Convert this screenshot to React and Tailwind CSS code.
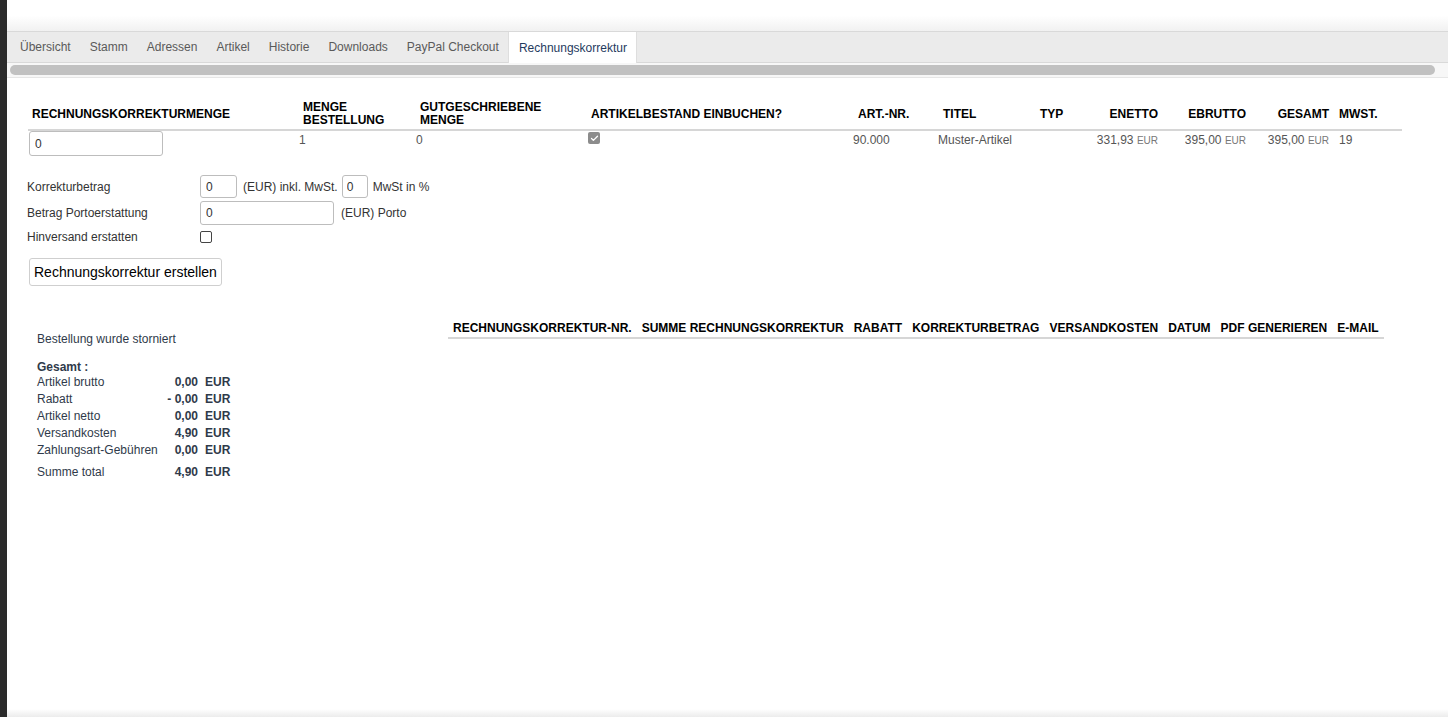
import { Check } from 'lucide-react';

const tabs = ['Übersicht', 'Stamm', 'Adressen', 'Artikel', 'Historie', 'Downloads', 'PayPal Checkout', 'Rechnungskorrektur'];

const totals = [
    { label: 'Artikel brutto', value: '0,00' },
    { label: 'Rabatt', value: '- 0,00' },
    { label: 'Artikel netto', value: '0,00' },
    { label: 'Versandkosten', value: '4,90' },
    { label: 'Zahlungsart-Gebühren', value: '0,00' },
];

const korrekturCols = ['Rechnungskorrektur-Nr.', 'Summe Rechnungskorrektur', 'Rabatt', 'Korrekturbetrag', 'Versandkosten', 'Datum', 'PDF generieren', 'E-Mail'];

function Eur({ value }) {
    return (
        <span>
            {value} <span className="text-[10px] text-[#777]">EUR</span>
        </span>
    );
}

export default function App() {
    return (
        <div className="flex h-[717px] overflow-hidden bg-white font-['Liberation_Sans',Arial,sans-serif] text-[12px] text-[#333]">
            {/* dark side strip */}
            <div className="w-[7px] shrink-0 bg-[#2b2b2b]"></div>

            <div className="flex flex-1 flex-col min-w-0">
                <div className="h-[31px] shrink-0 bg-gradient-to-b from-white via-white to-[#f1f1f1]"></div>

                {/* Tabs */}
                <div className="flex h-[32px] shrink-0 items-stretch border-y border-[#d9d9d9] bg-[#ebebeb] pl-[3.5px]">
                    {tabs.map((t, idx) => (
                        <div
                            key={idx}
                            className={
                                idx === tabs.length - 1
                                    ? 'flex items-center px-[9.5px] bg-white border-x border-[#dedede] text-[#1f3b5e] -mb-px'
                                    : 'flex items-center px-[9.5px] text-[#5a5a5a]'
                            }
                        >
                            {t}
                        </div>
                    ))}
                </div>

                {/* Scrollbar */}
                <div className="flex h-[15px] shrink-0 items-center border-b border-[#e6e6e6] bg-[#f7f7f7] pl-[3px] pr-[13px]">
                    <div className="h-[10px] flex-1 rounded-full bg-[#c1c1c1]"></div>
                </div>

                {/* Article table */}
                <div className="pl-[21px] pr-[46px] pt-[21px]">
                    <table className="w-[1374px] table-fixed border-collapse">
                        <thead>
                            <tr className="h-[31px] border-b-2 border-[#d6d6d6] align-middle text-left font-bold uppercase leading-[13px] text-black">
                                <th className="w-[271px] pl-[4px]">Rechnungskorrekturmenge</th>
                                <th className="w-[117px] pl-[4px]">Menge Bestellung</th>
                                <th className="w-[171px] pl-[4px]">Gutgeschriebene Menge</th>
                                <th className="w-[262px] pl-[4px]">Artikelbestand einbuchen?</th>
                                <th className="w-[85px] pl-[9px]">Art.-Nr.</th>
                                <th className="w-[102px] pl-[9px]">Titel</th>
                                <th className="w-[54px] pl-[4px]">Typ</th>
                                <th className="w-[72px] pr-[4px] text-right">eNetto</th>
                                <th className="w-[88px] pr-[4px] text-right">eBrutto</th>
                                <th className="w-[83px] pr-[4px] text-right">Gesamt</th>
                                <th className="w-[69px] pl-[6px]">MwSt.</th>
                            </tr>
                        </thead>
                        <tbody>
                            <tr className="align-top text-[#555]">
                                <td className="pl-[1px]">
                                    <input
                                        defaultValue="0"
                                        className="block h-[25px] w-[134px] rounded-[3px] border border-[#bdbdbd] px-[5px] text-[12px] text-[#333] outline-none"
                                    />
                                </td>
                                <td className="pt-0">1</td>
                                <td className="pt-0">0</td>
                                <td className="pl-[1px] pt-[1px]">
                                    <span className="flex h-[12px] w-[12px] items-center justify-center rounded-[2px] bg-[#8c8c8c]">
                                        <Check size={9} strokeWidth={3.5} className="text-white" />
                                    </span>
                                </td>
                                <td className="pl-[4px] pt-0">90.000</td>
                                <td className="pl-[4px] pt-0">Muster-Artikel</td>
                                <td className="pt-0"></td>
                                <td className="pr-[4px] pt-0 text-right"><Eur value="331,93" /></td>
                                <td className="pr-[4px] pt-0 text-right"><Eur value="395,00" /></td>
                                <td className="pr-[4px] pt-0 text-right"><Eur value="395,00" /></td>
                                <td className="pl-[6px] pt-0">19</td>
                            </tr>
                        </tbody>
                    </table>
                </div>

                {/* Correction form */}
                <div className="mt-[19px] flex flex-col gap-[3px] pl-[20px] text-[#333]">
                    <div className="flex h-[23px] items-center">
                        <span className="w-[173px]">Korrekturbetrag</span>
                        <input defaultValue="0" className="h-[23px] w-[37px] rounded-[3px] border border-[#bdbdbd] px-[5px] text-[12px] outline-none" />
                        <span className="ml-[6px]">(EUR) inkl. MwSt.</span>
                        <input defaultValue="0" className="ml-[4px] h-[23px] w-[26px] rounded-[3px] border border-[#bdbdbd] px-[4px] text-[12px] outline-none" />
                        <span className="ml-[5px]">MwSt in %</span>
                    </div>
                    <div className="flex h-[24px] items-center">
                        <span className="w-[173px]">Betrag Portoerstattung</span>
                        <input defaultValue="0" className="h-[24px] w-[134px] rounded-[3px] border border-[#bdbdbd] px-[5px] text-[12px] outline-none" />
                        <span className="ml-[7px]">(EUR) Porto</span>
                    </div>
                    <div className="mt-[1px] flex h-[15px] items-center">
                        <span className="w-[173px]">Hinversand erstatten</span>
                        <span className="h-[12px] w-[12px] rounded-[2px] border border-[#444] bg-white"></span>
                    </div>
                    <div className="mt-[11px] pl-[2px]">
                        <button className="h-[28px] rounded-[3px] border border-[#cfcfcf] bg-white px-[4px] text-[14px] text-black">
                            Rechnungskorrektur erstellen
                        </button>
                    </div>
                </div>

                {/* Lower section */}
                <div className="mt-[30px] flex items-start">
                    <div className="w-[441px] shrink-0 pl-[30px] pt-[16px] text-[#2f3a4a]">
                        <div className="leading-[14px]">Bestellung wurde storniert</div>
                        <div className="mt-[16px] font-bold leading-[11px]">Gesamt :</div>
                        {totals.map((r, idx) => (
                            <div key={idx} className="flex h-[17px] items-center">
                                <span className="w-[125px]">{r.label}</span>
                                <span className="w-[36px] text-right font-bold">{r.value}</span>
                                <span className="ml-[7px] font-bold">EUR</span>
                            </div>
                        ))}
                        <div className="mt-[5px] flex h-[17px] items-center">
                            <span className="w-[125px]">Summe total</span>
                            <span className="w-[36px] text-right font-bold">4,90</span>
                            <span className="ml-[7px] font-bold">EUR</span>
                        </div>
                    </div>

                    <table className="border-collapse">
                        <thead>
                            <tr className="h-[22px] border-b-2 border-[#d6d6d6] text-left font-bold uppercase text-black">
                                {korrekturCols.map((c, idx) => (
                                    <th key={idx} className="whitespace-nowrap px-[5px] pt-[2px]">{c}</th>
                                ))}
                            </tr>
                        </thead>
                    </table>
                </div>

                <div className="flex-1"></div>
                <div className="h-[8px] shrink-0 bg-gradient-to-b from-white to-[#ececec]"></div>
            </div>
        </div>
    );
}
